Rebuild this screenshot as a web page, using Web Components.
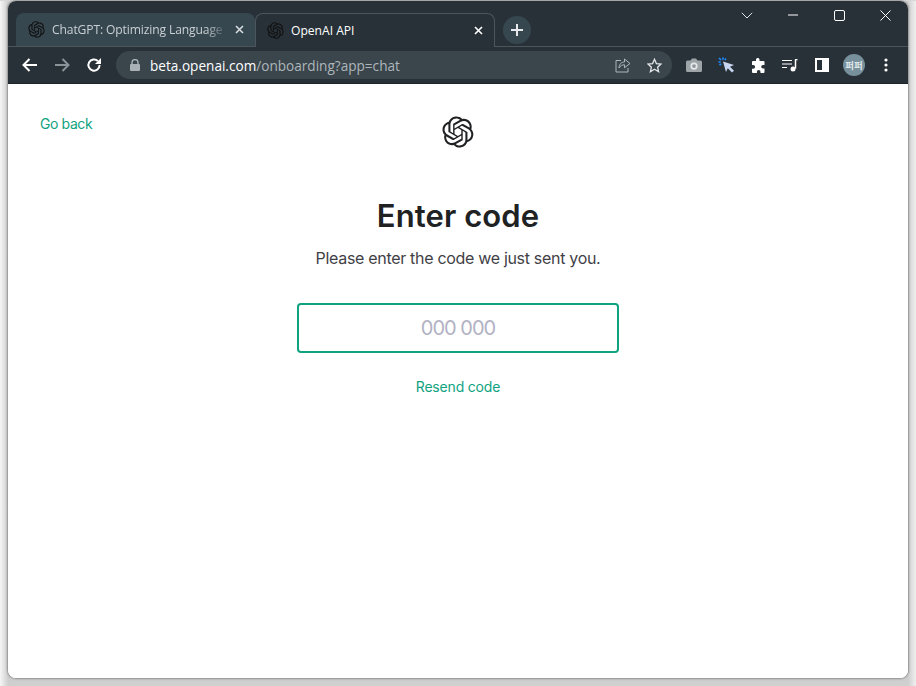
<!DOCTYPE html>
<html lang="en"><head><meta charset="utf-8"><title>OpenAI API</title>
<style>
html,body{margin:0;height:100%;overflow:hidden;background:#fff}
body{font-family:"Inter","Liberation Sans",sans-serif}
</style></head><body>
<desktop-frame>
  <chrome-tabstrip>
    <chrome-tab>ChatGPT: Optimizing Language</chrome-tab>
    <chrome-tab active>OpenAI API</chrome-tab>
  </chrome-tabstrip>
  <chrome-toolbar></chrome-toolbar>
  <onboarding-page></onboarding-page>
</desktop-frame>
<script>
const LOGO='M37.5324 16.8707C37.9808 15.5241 38.1363 14.0974 37.9886 12.6859C37.8409 11.2744 37.3934 9.91076 36.676 8.68622C35.6126 6.83404 33.9882 5.3676 32.0373 4.4985C30.0864 3.62941 27.9098 3.40259 25.8215 3.85078C24.8796 2.7893 23.7219 1.94125 22.4257 1.36341C21.1295 0.785575 19.7249 0.491269 18.3058 0.500197C16.1708 0.495044 14.0893 1.16803 12.3614 2.42214C10.6335 3.67624 9.34853 5.44666 8.6917 7.47815C7.30085 7.76286 5.98686 8.3414 4.8377 9.17505C3.68854 10.0087 2.73073 11.0782 2.02839 12.312C0.956464 14.1591 0.498905 16.2988 0.721698 18.4228C0.944492 20.5467 1.83612 22.5449 3.268 24.1293C2.81966 25.4759 2.66413 26.9026 2.81182 28.3141C2.95951 29.7256 3.40701 31.0892 4.12437 32.3138C5.18791 34.1659 6.8123 35.6322 8.76321 36.5013C10.7141 37.3704 12.8907 37.5973 14.9789 37.1492C15.9208 38.2107 17.0786 39.0587 18.3747 39.6366C19.6709 40.2144 21.0755 40.5087 22.4946 40.4998C24.6307 40.5054 26.7133 39.8321 28.4418 38.5772C30.1704 37.3223 31.4556 35.5506 32.1119 33.5179C33.5027 33.2332 34.8167 32.6547 35.9659 31.821C37.115 30.9874 38.0728 29.9178 38.7752 28.684C39.8458 26.8371 40.3023 24.6979 40.0789 22.5748C39.8556 20.4517 38.9639 18.4544 37.5324 16.8707ZM22.4978 37.8849C20.7443 37.8874 19.0459 37.2733 17.6994 36.1501C17.7601 36.117 17.8666 36.0586 17.936 36.0161L25.9004 31.4156C26.1003 31.3019 26.2663 31.137 26.3813 30.9378C26.4964 30.7386 26.5563 30.5124 26.5549 30.2825V19.0542L29.9213 20.998C29.9389 21.0068 29.9541 21.0198 29.9656 21.0359C29.977 21.052 29.9842 21.0707 29.9867 21.0902V30.3889C29.9842 32.375 29.1946 34.2791 27.7909 35.6841C26.3872 37.0892 24.4838 37.8806 22.4978 37.8849ZM6.39227 31.0064C5.51397 29.4888 5.19742 27.7107 5.49804 25.9832C5.55718 26.0187 5.66048 26.0818 5.73461 26.1244L13.699 30.7248C13.8975 30.8408 14.1233 30.902 14.3532 30.902C14.583 30.902 14.8088 30.8408 15.0073 30.7248L24.731 25.1103V28.9979C24.7321 29.0177 24.7283 29.0376 24.7199 29.0556C24.7115 29.0736 24.6988 29.0893 24.6829 29.1012L16.6317 33.7497C14.9096 34.7416 12.8643 35.0097 10.9447 34.4954C9.02506 33.9811 7.38785 32.7263 6.39227 31.0064ZM4.29707 13.6194C5.17156 12.0998 6.55279 10.9364 8.19885 10.3327C8.19885 10.4013 8.19491 10.5228 8.19491 10.6071V19.808C8.19351 20.0378 8.25334 20.2638 8.36823 20.4629C8.48312 20.6619 8.64893 20.8267 8.84863 20.9404L18.5723 26.5542L15.206 28.4979C15.1894 28.5089 15.1703 28.5155 15.1505 28.5173C15.1307 28.5191 15.1107 28.516 15.0924 28.5082L7.04046 23.8557C5.32135 22.8601 4.06716 21.2235 3.55289 19.3046C3.03862 17.3858 3.30624 15.3413 4.29707 13.6194ZM31.955 20.0556L22.2312 14.4411L25.5976 12.4981C25.6142 12.4872 25.6333 12.4805 25.6531 12.4787C25.6729 12.4769 25.6928 12.4801 25.7111 12.4879L33.7631 17.1364C34.9967 17.849 36.0017 18.8982 36.6606 20.1613C37.3194 21.4244 37.6047 22.849 37.4832 24.2684C37.3617 25.6878 36.8382 27.0432 35.9743 28.1759C35.1103 29.3086 33.9415 30.1717 32.6047 30.6641C32.6047 30.5947 32.6047 30.4733 32.6047 30.3889V21.188C32.6066 20.9586 32.5474 20.7328 32.4332 20.5338C32.319 20.3348 32.154 20.1698 31.955 20.0556ZM35.3055 15.0128C35.2464 14.9765 35.1431 14.9142 35.069 14.8717L27.1045 10.2712C26.906 10.1554 26.6803 10.0943 26.4504 10.0943C26.2206 10.0943 25.9948 10.1554 25.7963 10.2712L16.0726 15.8858V11.9982C16.0715 11.9783 16.0753 11.9585 16.0837 11.9405C16.0921 11.9225 16.1048 11.9068 16.1207 11.8949L24.1719 7.25025C25.4053 6.53903 26.8158 6.19376 28.2383 6.25482C29.6608 6.31589 31.0364 6.78077 32.2044 7.59508C33.3723 8.40939 34.2842 9.53945 34.8334 10.8531C35.3826 12.1667 35.5464 13.6095 35.3055 15.0128ZM14.2424 21.9419L10.8752 19.9981C10.8576 19.9893 10.8423 19.9763 10.8309 19.9602C10.8195 19.9441 10.8122 19.9254 10.8098 19.9058V10.6071C10.8107 9.18295 11.2173 7.78848 11.9819 6.58696C12.7466 5.38544 13.8377 4.42659 15.1275 3.82264C16.4173 3.21869 17.8524 2.99464 19.2649 3.1767C20.6775 3.35876 22.0089 3.93941 23.1034 4.85067C23.0427 4.88379 22.937 4.94215 22.8668 4.98473L14.9024 9.58517C14.7025 9.69878 14.5366 9.86356 14.4215 10.0626C14.3065 10.2616 14.2466 10.4877 14.2479 10.7175L14.2424 21.9419ZM16.071 17.9991L20.4018 15.4978L24.7325 17.9975V22.9985L20.4018 25.4983L16.071 22.9985V17.9991Z';
const logo=(s,c)=>`<svg width="${s}" height="${s}" viewBox="0 0 41 41"><path fill="${c}" d="${LOGO}"/></svg>`;
const def=(name,html,init)=>customElements.define(name,class extends HTMLElement{
  constructor(){super();this.attachShadow({mode:'open'}).innerHTML=typeof html==='function'?html(this):html;}
  connectedCallback(){init&&init(this)}
});

def('desktop-frame',`<style>
:host{display:block;height:686px;box-sizing:border-box;padding:1px 8px 8px;
 background:linear-gradient(#d8d8d8 0,#d8d8d8 1px,transparent 1px),linear-gradient(90deg,#f6f6f6 0,#cfcfcf 8px,#cfcfcf 908px,#f0f0f0 916px)}
.win{height:677px;display:flex;flex-direction:column;background:#fff;border-radius:8px;overflow:hidden;box-shadow:0 0 2px 1px rgba(90,90,90,.55)}
</style><div class="win"><slot></slot></div>`);

def('chrome-tabstrip',`<style>
:host{display:flex;height:45px;flex:none;background:#283138;border-bottom:1px solid #4c555b;box-sizing:content-box;position:relative;align-items:flex-start}
.tabs{display:flex;padding:12px 0 0 8px;align-items:flex-start}
.new{width:28px;height:28px;border-radius:50%;background:#37474f;margin:15px 0 0 8px;display:flex;align-items:center;justify-content:center;flex:none}
.ctl{margin-left:auto;display:flex;color:#fff}
.ctl div{width:46px;height:28px;display:flex;align-items:center;justify-content:center}
</style>
<div class="tabs"><slot></slot></div>
<div class="new"><svg width="14" height="14" viewBox="0 0 14 14"><path d="M7 1v12M1 7h12" stroke="#e8eaed" stroke-width="2"/></svg></div>
<div class="ctl">
 <div><svg width="12" height="7" viewBox="0 0 12 7"><path d="M.8.8 6 6 11.2.8" fill="none" stroke="#dfe3e6"/></svg></div>
 <div><svg width="10" height="2" viewBox="0 0 10 2"><path d="M0 1h10" stroke="#fff"/></svg></div>
 <div><svg width="11" height="11" viewBox="0 0 11 11"><rect x=".5" y=".5" width="10" height="10" rx="1.5" fill="none" stroke="#fff"/></svg></div>
 <div><svg width="11" height="11" viewBox="0 0 11 11"><path d="M.5.5l10 10M10.5.5l-10 10" stroke="#fff"/></svg></div>
</div>`);

def('chrome-tab',el=>{const a=el.hasAttribute('active');return `<style>
:host{display:flex;align-items:center;box-sizing:border-box;flex:none;position:relative;
 font:12.1px "Open Sans","Liberation Sans",sans-serif;
 ${a?'width:240px;background:#283138;border:1px solid #4c555b;border-bottom:0;height:34px;margin-bottom:-1px;border-radius:8px 8px 0 0;color:#fff;padding:0 10px 0 11px;z-index:1':'width:239px;height:33px;background:#37474f;border-radius:8px 8px 0 0;color:#c9d0d4;padding:0 10px 0 12px;letter-spacing:-.12px'}}
.t{flex:1;overflow:hidden;white-space:nowrap;margin-left:7px;min-width:0;${a?'':'-webkit-mask-image:linear-gradient(90deg,#000 88%,transparent);mask-image:linear-gradient(90deg,#000 88%,transparent)'}}
svg{flex:none;display:block}
.x{margin-left:8px;margin-right:1px}
</style>${logo(17,'#111')}<span class="t"><slot></slot></span>
<svg class="x" width="9" height="9" viewBox="0 0 9 9"><path d="M1 1l7 7M8 1 1 8" stroke="${a?'#fff':'#d5dadd'}" stroke-width="1.6"/></svg>`});

def('chrome-toolbar',`<style>
:host{display:flex;align-items:center;height:37px;flex:none;background:#283138;box-sizing:border-box;padding:0 14px 0 12px;border-bottom:1px solid #1e252a}
svg{display:block;flex:none}
.nav{display:flex;gap:0;align-items:center}
.nav div,.ext div{width:32px;height:28px;display:flex;align-items:center;justify-content:center}
.omni{margin-left:12px;width:556px;height:28px;border-radius:14px;background:#3a454c;display:flex;align-items:center;padding:0 10px 0 14px;box-sizing:border-box;flex:none;
 font:13.6px "Open Sans","Liberation Sans",sans-serif;color:#aeb6ba}
.omni b{font-weight:400;color:#fff}
.omni span{margin-left:10px;white-space:nowrap;flex:1}
.omni svg+svg{margin-left:16px}
.ext{display:flex;margin-left:6px;align-items:center}
.av{width:22px;height:22px;border-radius:50%;background:#78909c;color:#dfe5e8;font:700 9.5px "Noto Sans CJK KR",sans-serif;display:flex;align-items:center;justify-content:center;white-space:nowrap}
</style>
<div class="nav">
 <div style="width:20px"><svg width="16" height="14" viewBox="0 0 16 14"><path d="M15 7H2M7.5 1 1.5 7l6 6" fill="none" stroke="#fff" stroke-width="2"/></svg></div>
 <div style="width:44px"><svg width="16" height="14" viewBox="0 0 16 14"><path d="M1 7h13M8.500 1l6 6-6 6" fill="none" stroke="#8b9398" stroke-width="2"/></svg></div>
 <div style="width:20px"><svg width="16" height="16" viewBox="0 0 16 16"><path d="M13.6 8a5.6 5.600 0 1 1-1.700-4" fill="none" stroke="#fff" stroke-width="2"/><path d="M15 1v6H9z" fill="#fff"/></svg></div>
</div>
<div class="omni">
 <svg width="10" height="12" viewBox="0 0 10 12"><path d="M2 5V3.500a3 3 0 0 1 6 0V5" fill="none" stroke="#aab2b7" stroke-width="1.400"/><rect y="5" width="10" height="7" rx="1" fill="#aab2b7"/></svg>
 <span><b>beta.openai.com</b>/onboarding?app=chat</span>
 <svg width="16" height="15" viewBox="0 0 16 15"><path d="M6 2.500H1v11.500h12v-4" fill="none" stroke="#aeb6ba"/><path d="M9.500 1v3C6 4 4 6.500 4 10c1.500-2.500 3-3.200 5.500-3.200v3L15 5.500z" fill="none" stroke="#aeb6ba"/></svg>
 <svg width="15" height="15" viewBox="0 0 15 15"><path d="M7.500 1.300 9.400 5.600l4.600.5-3.400 3.100 1 4.500-4.100-2.400-4.100 2.400 1-4.500L1 6.100l4.600-.5z" fill="none" stroke="#e3e6e8" stroke-width="1.300"/></svg>
</div>
<div class="ext">
 <div><svg width="16" height="14" viewBox="0 0 16 14"><path fill="#9ea5a9" d="M1.500 2.500H4.500L6 .5h4l1.500 2h3a1.500 1.500 0 0 1 1.500 1.500v8.500A1.500 1.500 0 0 1 14.500 14h-13A1.500 1.500 0 0 1 0 12.500V4a1.500 1.500 0 0 1 1.500-1.500Z"/><circle cx="8" cy="8.100" r="3.600" fill="#e6e8e9"/><circle cx="8" cy="8.100" r="1.900" fill="#8f979b"/></svg></div>
 <div><svg width="17" height="16" viewBox="0 0 17 16"><path d="M5 4.500 8 15l1.800-3.800L14 15.500l2-1.800-4-3.900L16 8z" fill="#c9d6f2"/><path d="M1 1l2 2M5 .5v2.200M.5 5h2.200M8 1.500 6.800 3M1.500 8 3 6.800" stroke="#1a8cff" stroke-width="1.700"/></svg></div>
 <div><svg width="15" height="15" viewBox="0 0 15 15"><path fill="#fff" d="M5 1.500a1.800 1.800 0 0 1 3.500 0V3h4a1 1 0 0 1 1 1v3H12a1.800 1.800 0 0 0 0 3.600h1.500V14a1 1 0 0 1-1 1H9.500v-1.200a1.800 1.800 0 0 0-3.600 0V15H2a1 1 0 0 1-1-1v-3.300h1.200a1.900 1.900 0 0 0 0-3.800H1V4a1 1 0 0 1 1-1h3z"/></svg></div>
 <div><svg width="16" height="13" viewBox="0 0 16 13"><path d="M0 1.500h10M0 5h10M0 8.500h5" stroke="#fff" stroke-width="1.200"/><path d="M13 .5h2.500M13.500.5v9" stroke="#fff" stroke-width="1.500" fill="none"/><circle cx="11" cy="10" r="2.500" fill="#fff"/></svg></div>
 <div><svg width="14" height="14" viewBox="0 0 14 14"><path fill="#fff" fill-rule="evenodd" d="M0 0h14v14H0zM2 2v10h5V2z"/></svg></div>
 <div><span class="av">퍼퍼</span></div>
 <div><svg width="4" height="14" viewBox="0 0 4 14"><circle cx="2" cy="2" r="1.600" fill="#fff"/><circle cx="2" cy="7" r="1.600" fill="#fff"/><circle cx="2" cy="12" r="1.600" fill="#fff"/></svg></div>
</div>`);

def('onboarding-page',`<style>
:host{display:block;flex:1;background:#fff;color:#202123;font-family:Inter,"Liberation Sans",sans-serif}
header{display:grid;grid-template-columns:1fr auto 1fr;padding:32px 32px 0;align-items:start}
a{color:#10a37f;font-size:14px;line-height:17px;text-decoration:none}
header a{letter-spacing:-.4px;margin-top:-1px}
.logo{display:block}
main{display:flex;flex-direction:column;align-items:center}
h1{margin:45px 0 0;font-size:31px;line-height:38px;font-weight:600;letter-spacing:.1px}
p{margin:12px 0 0;font-size:16px;line-height:22px;color:#3f3f46;letter-spacing:-.31px}
.in{width:322px;height:50px;box-sizing:border-box;border:2px solid #10a37f;border-radius:4px;margin-top:34px;display:flex;align-items:center;justify-content:center;font-size:20px;color:#b2b2c4;letter-spacing:-1px}
.r{margin-top:25px;letter-spacing:-.18px}
</style>
<header><a href="#">Go back</a><div class="logo">${logo(32,'#202123')}</div><span></span></header>
<main>
 <h1>Enter code</h1>
 <p>Please enter the code we just sent you.</p>
 <div class="in">000 000</div>
 <a class="r" href="#">Resend code</a>
</main>`);
</script>
</body></html>
